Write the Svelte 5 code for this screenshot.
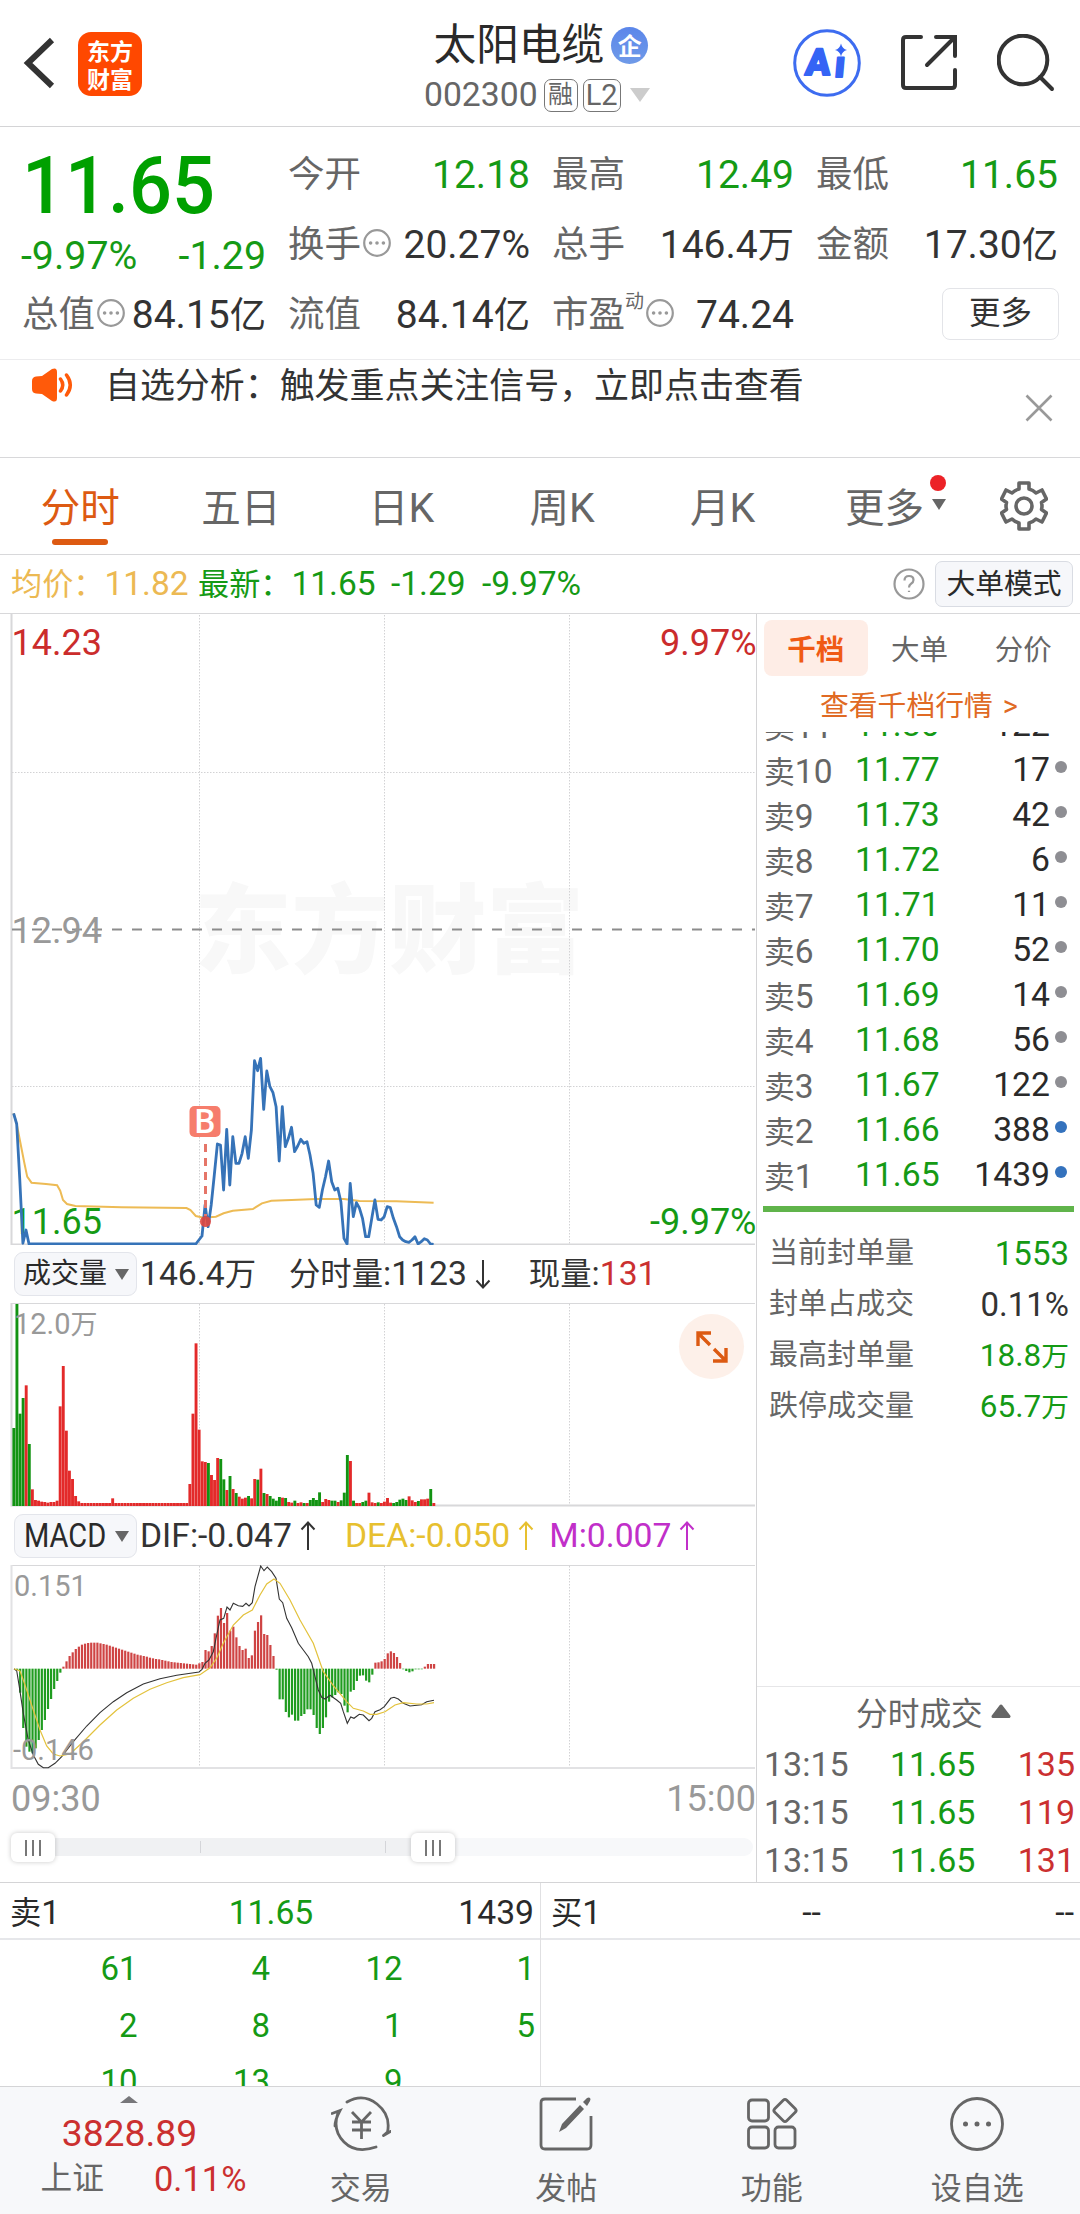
<script>
  const HAN = /([\u3000-\u9fff\uff00-\uffef]+)/;
  const runs = (s) => s.split(HAN).filter(Boolean).map((text) => ({ text, han: HAN.test(text) }));

  const stats = [
    { label: '今开', value: '12.18', down: true },
    { label: '最高', value: '12.49', down: true },
    { label: '最低', value: '11.65', down: true },
    { label: '换手', value: '20.27%', info: true },
    { label: '总手', value: '146.4万' },
    { label: '金额', value: '17.30亿' },
    { label: '总值', value: '84.15亿', info: true },
    { label: '流值', value: '84.14亿' },
    { label: '市盈', sup: '动', value: '74.24', info: true }
  ];

  const periods = ['分时', '五日', '日K', '周K', '月K'];

  const asks = [
    ['11', '11.80', 122], ['10', '11.77', 17], ['9', '11.73', 42], ['8', '11.72', 6],
    ['7', '11.71', 11], ['6', '11.70', 52], ['5', '11.69', 14], ['4', '11.68', 56],
    ['3', '11.67', 122], ['2', '11.66', 388], ['1', '11.65', 1439]
  ];

  const seals = [
    ['当前封单量', '1553', true],
    ['封单占成交', '0.11%', false],
    ['最高封单量', '18.8万', true],
    ['跌停成交量', '65.7万', true]
  ];

  const ticks = [['13:15', '11.65', 135], ['13:15', '11.65', 119], ['13:15', '11.65', 131]];
  const queue = ['61', '4', '12', '1', '2', '8', '1', '5', '10', '13', '9', ''];

  const join = (pts) => pts.map(([x, y]) => `${x.toFixed(1)},${y.toFixed(1)}`).join(' ');

  // minute index -> horizontal position in the plots
  const minuteX = (i) => 13.6 + i * 3.088;
  const priceY = (v) => 226 + v / 3;

  const flat = Array(54).fill(1212);
  const price = [820, 852, 1020, 1210, 1170, 1212, ...flat, 1200, 1188, 1095, 1160, 1095, 1005, 912, 915, 1050, 868,
    1035, 890, 970, 970, 940, 890, 955, 870, 662, 692, 655, 808, 693, 740, 758, 800, 963, 800, 920, 895, 862, 935,
    918, 898, 910, 905, 945, 1000, 1095, 1102, 1050, 1010, 963, 1025, 1050, 1045, 1085, 1195, 1212, 1030, 1130,
    1088, 1105, 1135, 1190, 1190, 1135, 1080, 1138, 1140, 1130, 1100, 1103, 1135, 1160, 1190, 1200, 1205, 1207,
    1200, 1190, 1212, 1205, 1196, 1200, 1212, 1213];
  const priceLine = join(price.map((v, i) => [minuteX(i), priceY(v)]));

  const average = [[0, 820], [1, 852], [3.5, 970], [4.4, 1010], [5.8, 1028], [10.5, 1032], [14.1, 1036], [15.1, 1052],
    [16, 1080], [17.3, 1092], [20, 1098], [35, 1102], [56, 1104], [57.3, 1110], [59, 1128], [61.5, 1133],
    [65.5, 1130], [68, 1120], [71, 1112], [77.5, 1107], [80.4, 1090], [83.5, 1082], [90, 1080], [98, 1077],
    [107, 1077], [112, 1083], [124, 1084], [136, 1088]];
  const averageLine = join(average.map(([i, v]) => [minuteX(i), priceY(v)]));

  const rep = (v, n) => Array(n).fill(v);
  const volume = ['g564', 'g192', 'g521', 'g474', 'r436', 'g612', 'r748', 'r780', 'r782', 'r785', 'r786', 'r788',
    'r786', 'r786', 'r782', 'r499', 'r378', 'r572', 'r692', 'r717', 'r768', 'r784', ...rep('r789', 10), 'r775',
    ...rep('r789', 24), 'r732', 'r521', 'r310', 'r569', 'r664', 'r666', 'g669', 'r705', 'r720', 'r654', 'g657',
    'g718', 'r750', 'g708', 'r747', 'g759', 'r770', 'r776', 'r773', 'g768', 'r775', 'r717', 'g719', 'r686', 'g759',
    'r762', 'g768', 'g776', 'g782', 'g771', 'r773', 'g774', 'r786', 'r788', 'g782', 'r789', 'r787', 'g789', 'r789',
    'g780', 'g774', 'g780', 'g757', 'r786', 'r777', 'r780', 'g782', 'g782', 'r786', 'g781', 'g758', 'g645', 'r663',
    'g782', 'r789', 'r789', 'g786', 'g782', 'r758', 'r787', 'r789', 'g787', 'r789', 'r785', 'r774', 'r788', 'g789',
    'g786', 'g779', 'g776', 'g780', 'r769', 'r781', 'r786', 'g783', 'r778', 'r778', 'r776', 'g747', 'r789'
  ].map((s) => ({ up: s[0] === 'r', y: Number(s.slice(1)) / 3 - 63 }));

  const macdY = (v) => v / 3 - 65;
  const histogram = [510, 578, 684, 740, 755, 760, 745, 720, 690, 660, 627, 597, 567, 543, 518, 500, 484, 468, 457,
    447, 440, 434, 431, 429, 428, 428, 428, 430, 432, 434, 437, 440, 443, 446, 449, 452, 455, 458, 461, 464, 466,
    468, 470, 473, 475, 477, 478, 480, 482, 484, 486, 487, 488, 489, 490, 491, 492, 493, 494, 490, 486, 450, 454,
    438, 400, 347, 324, 369, 339, 392, 380, 412, 438, 450, 446, 474, 466, 392, 366, 346, 402, 405, 435, 468, 509,
    598, 598, 636, 652, 644, 662, 662, 648, 642, 628, 628, 645, 684, 702, 684, 652, 605, 592, 585, 577, 582, 617,
    637, 575, 570, 543, 527, 526, 542, 547, 524, 488, 487, 484, 477, 460, 454, 459, 471, 489, 506, 513, 517, 514,
    508, 508, 506, 500, 492, 492, 492];
  const zero = macdY(506);
  const histStep = 417 / (histogram.length - 1);

  const scaled = (pts) => join(pts.map(([x, y]) => [x / 3, macdY(y)]));
  const dif = scaled([[42, 506], [50, 512], [58, 560], [70, 640], [85, 720], [100, 765], [115, 793], [130, 803],
    [145, 803], [165, 790], [185, 770], [220, 725], [260, 678], [300, 638], [340, 605], [380, 578], [430, 552],
    [480, 536], [530, 526], [597, 516], [606, 508], [615, 490], [627, 480], [640, 455], [650, 405], [660, 360],
    [671, 355], [681, 321], [690, 330], [700, 310], [715, 317], [728, 319], [738, 310], [747, 318], [757, 308],
    [765, 260], [782, 198], [792, 212], [802, 201], [815, 215], [828, 235], [838, 297], [848, 308], [860, 355],
    [875, 383], [895, 430], [910, 450], [925, 470], [935, 490], [945, 530], [955, 570], [965, 592], [975, 597],
    [990, 586], [1010, 600], [1022, 610], [1030, 635], [1042, 670], [1052, 651], [1062, 655], [1078, 643],
    [1090, 645], [1107, 662], [1115, 655], [1125, 635], [1140, 629], [1153, 620], [1172, 595], [1182, 592],
    [1195, 597], [1210, 610], [1230, 618], [1265, 614], [1280, 605], [1302, 601]]);
  const dea = scaled([[42, 506], [60, 513], [75, 555], [100, 630], [120, 690], [140, 738], [160, 762], [180, 768],
    [210, 762], [250, 725], [300, 675], [350, 630], [400, 595], [450, 568], [500, 548], [550, 533], [600, 524],
    [630, 503], [650, 475], [670, 430], [700, 375], [730, 345], [757, 330], [780, 285], [800, 252], [822, 237],
    [840, 250], [870, 300], [900, 360], [940, 430], [970, 515], [1000, 557], [1040, 605], [1060, 625], [1090, 633],
    [1110, 643], [1130, 643], [1155, 635], [1185, 615], [1210, 608], [1250, 612], [1280, 612], [1302, 608]]);

  const columns = [199.5, 384.5, 569.5];
</script>

{#snippet mixed(s)}{#each runs(s) as r}{#if r.han}<span class="han">{r.text}</span>{:else}{r.text}{/if}{/each}{/snippet}

{#snippet dots()}
  <svg class="dots" viewBox="0 0 28 28"><circle cx="14" cy="14" r="12.8" /><path d="M7.6 14h.01M14 14h.01M20.4 14h.01" /></svg>
{/snippet}

{#snippet arrow(down)}
  <svg class="arrow" class:flip={down} viewBox="0 0 16 30"><path d="M8 29V1.5M1.5 8.5 8 1.5l6.5 7" /></svg>
{/snippet}

<div class="screen">
  <header>
    <svg class="back" viewBox="0 0 34 54"><path d="M29 4 5 27 29 50" /></svg>
    <div class="logo"><span>东方</span><span>财富</span></div>
    <div class="title">
      <div class="name">太阳电缆<span class="corp">企</span></div>
      <div class="code">002300<span class="tag rong">融</span><span class="tag l2">L2</span><i class="caret"></i></div>
    </div>
    <div class="actions">
      <svg class="ai" viewBox="0 0 68 68">
        <circle cx="34" cy="34" r="32.3" />
        <g transform="skewX(-5)"><text x="15.500" y="46.500" class="ai-text">A</text><text x="45" y="48" class="ai-text">ı</text></g>
        <path d="M48 14.500Q49.200 19.800 54 21 49.200 22.200 48 27.500 46.800 22.200 42 21 46.800 19.800 48 14.500Z" />
      </svg>
      <svg class="share" viewBox="0 0 56 56"><path d="M20 2H5Q2 2 2 5v45q0 3 3 3h46q3 0 3-3V35M35 2h19v19M53 3 26 30" /></svg>
      <svg class="search" viewBox="0 0 58 58"><circle cx="26" cy="26" r="24.300" /><path d="m43 43 12 12" /></svg>
    </div>
  </header>

  <section class="quote">
    <div class="last">
      <div class="big">11.65</div>
      <div class="chg"><span>-9.97%</span><span>-1.29</span></div>
    </div>
    {#each stats as s}
      <div class="stat">
        <span class="lab">{s.label}{#if s.sup}<sup>{s.sup}</sup>{/if}</span>
        {#if s.info}{@render dots()}{/if}
        <span class="val" class:down={s.down}>{@render mixed(s.value)}</span>
      </div>
    {/each}
    <div class="stat end"><button class="more">更多</button></div>
  </section>

  <section class="banner">
    <svg class="horn" viewBox="0 0 42 34">
      <path class="fill" d="M0 13q0-4 4-4.500L10 8 20 1q5-2 5 3v26q0 5-5 3L10 26l-6-.5Q0 25 0 21Z" />
      <path d="M28.500 11q4.500 6 0 12M34.500 7q7.500 10 0 20" />
    </svg>
    <p>自选分析：触发重点关注信号，立即点击查看</p>
    <svg class="close" viewBox="0 0 28 28"><path d="m1.500 1.500 25 25m0-25-25 25" /></svg>
  </section>

  <nav class="periods">
    {#each periods as p, i}
      <span class="period" class:on={i === 0}>{@render mixed(p)}</span>
    {/each}
    <span class="period last-tab">更多<i class="tri"></i><i class="badge"></i></span>
    <svg class="gear" viewBox="0 0 48 50">
      <path d="M19 2h10v6q4 1 7 4l6-3 4.500 9-5 3.500q1 3.500 0 7l5 3.500-4.500 9-6-3q-3 3-7 4v6H19v-6q-4-1-7-4l-6 3-4.500-9 5-3.500q-1-3.500 0-7l-5-3.500L6 9l6 3q3-3 7-4Z" />
      <circle cx="24" cy="25" r="8" />
    </svg>
  </nav>

  <section class="info">
    <span class="avg">{@render mixed('均价：11.82')}</span>
    <span class="new">{@render mixed('最新：11.65')}</span>
    <span class="d1">-1.29</span>
    <span class="d2">-9.97%</span>
    <svg class="help" viewBox="0 0 32 32"><circle cx="16" cy="16" r="14.500" /><path d="M11.500 12.500q0-4.500 4.500-4.500t4.500 4q0 2.200-2.500 3.800Q16 17 16 19.500M16 22.800v1.200" /></svg>
    <button class="mode">大单模式</button>
  </section>

  <main>
    <div class="charts">
      <svg class="plot" width="756" height="631" viewBox="0 0 756 631">
        <text class="mark" x="194" y="351" textLength="390" lengthAdjust="spacingAndGlyphs">东方财富</text>
        <g class="grid">
          {#each columns as x}<path d="M{x} 1V630" />{/each}
          <path d="M12 158.500H755M12 472.500H755" />
        </g>
        <path class="frame" d="M11.500 0V630.500H755" />
        <path class="mid" d="M12 315.500H755" />
        <text class="tick up" x="11.500" y="40.500">14.23</text>
        <text class="tick up" x="756.500" y="40.500" text-anchor="end">9.97%</text>
        <text class="tick" x="11.500" y="328.500">12.94</text>
        <text class="tick down" x="11.500" y="620">11.65</text>
        <text class="tick down" x="756.500" y="620" text-anchor="end">-9.97%</text>
        <polyline class="avg-line" points={averageLine} />
        <polyline class="price-line" points={priceLine} />
        <path class="b-stem" d="M205.500 530V602" />
        <circle class="b-dot" cx="205.500" cy="607.500" r="5.500" />
        <rect class="b-box" x="189.500" y="492" width="31" height="31" rx="5" />
        <text class="b-text" x="205" y="518.500" text-anchor="middle">B</text>
      </svg>

      <div class="ind">
        <button class="pick">成交量<i></i></button>
        <span>{@render mixed('146.4万')}</span>
        <span class="minute">{@render mixed('分时量:1123')}</span>{@render arrow(true)}
        <span class="now">{@render mixed('现量:')}<b>131</b></span>
      </div>

      <div class="vol">
        <svg class="plot" width="756" height="204" viewBox="0 0 756 204">
          <g class="grid">{#each columns as x}<path d="M{x} 1V202" />{/each}</g>
          <path class="frame thin" d="M11 .5H755" />
          <path class="frame" d="M11.500 0V202.500H755" />
          {#each volume as v, i}
            <rect class={v.up ? 'red' : 'green'} x={12.400 + i * 3.088} y={v.y} width="2.900" height={203 - v.y} />
          {/each}
          <text class="small" x="14" y="31">12.0<tspan class="han">万</tspan></text>
        </svg>
        <div class="expand">
          <svg viewBox="0 0 32 32"><path d="M2 15V2h13M2 2l12 12M30 17v13H17M30 30 18 18" /></svg>
        </div>
      </div>

      <div class="ind">
        <button class="pick"><em>MACD</em><i></i></button>
        <span>DIF:-0.047</span>{@render arrow(false)}
        <span class="dea">DEA:-0.050{@render arrow(false)}</span>
        <span class="m">M:0.007{@render arrow(false)}</span>
      </div>

      <svg class="plot" width="756" height="205" viewBox="0 0 756 205">
        <g class="grid">{#each columns as x}<path d="M{x} 1V202" />{/each}</g>
        <path class="frame thin" d="M11 .5H755" />
        <path class="frame soft" d="M11.500 0V203H755" />
        {#each histogram as v, i}
          {@const y = macdY(v)}
          <rect class={y < zero ? 'hr' : 'hg'} x={16 + i * histStep} y={Math.min(y, zero)} width="2.200" height={Math.max(Math.abs(y - zero), 0.6)} />
        {/each}
        <polyline class="dif" points={dif} />
        <polyline class="dea-line" points={dea} />
        <text class="small" x="14" y="31">0.151</text>
        <text class="small" x="13" y="195">-0.146</text>
      </svg>

      <div class="times"><span>09:30</span><span>15:00</span></div>

      <div class="slider">
        <div class="track"><div class="range"></div>{#each columns.slice(0, 2) as x}<i class="notch" style:left="{x - 33}px"></i>{/each}</div>
        <div class="thumb start"><i></i><i></i><i></i></div>
        <div class="thumb stop"><i></i><i></i><i></i></div>
      </div>
    </div>

    <aside>
      <div class="modes"><span class="on">千档</span><span>大单</span><span>分价</span></div>
      <div class="link">查看千档行情<span>&gt;</span></div>
      <div class="asks">
        {#each asks as [level, p, n]}
          <div class="ask">
            <span class="lv">{@render mixed('卖' + level)}</span>
            <span class="pr">{p}</span>
            <span class="qty">{n}</span>
            <i class:blue={n === 388 || n === 1439} class:none={level === '11'}></i>
          </div>
        {/each}
      </div>
      <div class="bar"></div>
      <div class="seals">
        {#each seals as [k, v, g]}
          <div><span>{k}</span><b class:down={g}>{@render mixed(v)}</b></div>
        {/each}
      </div>
      <div class="deals">
        <div class="deals-title">分时成交<svg viewBox="0 0 20 14"><path d="M10 2 18 12.500H2Z" /></svg></div>
        {#each ticks as [t, p, n]}
          <div class="deal"><span>{t}</span><span class="down">{p}</span><span class="up">{n}</span></div>
        {/each}
      </div>
    </aside>
  </main>

  <section class="depth">
    <div class="side">
      <div class="head"><span>{@render mixed('卖1')}</span><span class="down">11.65</span><span>1439</span></div>
      <div class="queue">{#each queue as q}<span>{q}</span>{/each}</div>
    </div>
    <div class="side">
      <div class="head"><span>{@render mixed('买1')}</span><span>--</span><span>--</span></div>
    </div>
  </section>

  <footer>
    <div class="index">
      <i></i>
      <strong>3828.89</strong>
      <div><span>上证</span><b>0.11%</b></div>
    </div>
    <div class="item">
      <svg viewBox="0 0 60 60">
        <path d="M16 8Q32-1 46 10t10.500 28M56.500 38 52.500 41.500M52.500 41.500 59.500 37.500M7 19Q1 36 13 48t32 5M1 19.500 9 16.500Q4 26 4 32" class="ring" />
        <path d="m21 18 9.500 10L40 18M30.500 28v17M21 28h19M21 36h19" />
      </svg>
      <span>交易</span>
    </div>
    <div class="item">
      <svg viewBox="0 0 60 60">
        <path d="M40 5H9Q5 5 5 9v42q0 4 4 4h42q4 0 4-4V22" />
        <path class="pen" d="m23 38 3-8 18-19 4 4-18 19ZM47 8l4-4q2-1 3 0t0 3l-3 5Z" />
      </svg>
      <span>发帖</span>
    </div>
    <div class="item">
      <svg viewBox="0 0 60 60">
        <rect x="6.500" y="6" width="20" height="21" rx="3.500" /><rect x="6.500" y="33" width="20" height="21" rx="3.500" />
        <rect x="33" y="33" width="20" height="21" rx="3.500" /><rect x="34.500" y="8" width="17" height="17" rx="2.500" transform="rotate(45 43 16.500)" />
      </svg>
      <span>功能</span>
    </div>
    <div class="item">
      <svg viewBox="0 0 60 60"><circle cx="30" cy="30" r="25.500" /><path class="pts" d="M18.500 30h.01M30 30h.01M41.500 30h.01" /></svg>
      <span>设自选</span>
    </div>
  </footer>
</div>

<style>
  :global(body) { margin: 0; background: #fff; }
  .screen, .screen * { box-sizing: border-box; }
  .screen {
    width: 1080px; height: 2214px; overflow: hidden; display: flex; flex-direction: column;
    font-family: Roboto, "Noto Sans CJK SC", sans-serif; color: #333; background: #fff; white-space: nowrap;
  }
  button { font: inherit; color: inherit; padding: 0; margin: 0; background: none; white-space: nowrap; }
  i, em { font-style: normal; }
  svg { display: block; flex: none; fill: none; }
  .han { font-size: .93em; }
  .down { color: #159a15; }
  .up { color: #cb3030; }

  header { height: 127px; flex: none; border-bottom: 1px solid #d4d4d6; display: grid; grid-template-columns: 23px 55px 64px 1fr 268px 19px; align-items: center; }
  .back { grid-column: 2; width: 34px; height: 54px; stroke: #333; stroke-width: 6; }
  .logo { width: 64px; height: 64px; border-radius: 13px; background: #ff4800; color: #fff; font: 700 23px/28px "Noto Sans CJK SC", sans-serif; display: flex; flex-direction: column; align-items: center; justify-content: center; margin-top: 1px; }
  .title { padding-left: 282px; align-self: start; }
  .name { font-size: 42.700px; line-height: 50px; margin-top: 20px; display: flex; align-items: center; padding-left: 9.500px; color: #2a2a2a; }
  .corp { width: 37px; height: 37px; border-radius: 50%; background: linear-gradient(#5b86ea, #6f9ae8); color: #fff; font: 700 24px/36px "Noto Sans CJK SC", sans-serif; text-align: center; margin-left: 7px; }
  .code { font-size: 33.700px; line-height: 40px; margin-top: 5px; display: flex; align-items: center; color: #666; }
  .tag { height: 33px; border: 1.500px solid #777; border-radius: 7px; line-height: 30px; text-align: center; }
  .rong { width: 34px; font-size: 25px; margin-left: 6px; }
  .l2 { width: 38px; font-size: 29px; margin-left: 5px; }
  .caret { border: 10.500px solid transparent; border-top: 14px solid #ccc; border-bottom: 0; margin-left: 9px; }
  .actions { display: flex; align-items: center; justify-content: space-between; }
  .ai { width: 68px; height: 68px; }
  .ai circle { stroke: #3d6cf0; stroke-width: 3; }
  .ai path { fill: #3564f5; }
  .ai-text { font: 900 37px Roboto, sans-serif; fill: #3564f5; stroke: #3564f5; stroke-width: 1.800; stroke-linejoin: round; }
  .share { width: 56px; height: 56px; stroke: #333; stroke-width: 4; stroke-linecap: round; }
  .search { width: 58px; height: 58px; stroke: #333; stroke-width: 4; margin: 0 6px 0 0; stroke-linecap: round; }

  .quote { height: 233px; flex: none; border-bottom: 1px solid #ececee; padding: 12px 0 0 22px; display: grid; grid-template-columns: 244px 242px 242px 242px; column-gap: 22px; grid-template-rows: 70px 70px 70px; }
  .last { grid-row: 1 / 3; color: #00a000; }
  .big { font-size: 80px; font-weight: 500; line-height: 95px; transform: scaleX(.945); transform-origin: 0 50%; }
  .chg { display: flex; justify-content: space-between; font-size: 39.300px; line-height: 44px; margin-left: -1px; color: #159a15; }
  .stat { display: flex; align-items: center; font-size: 39px; line-height: 70px; padding-top: 2px; }
  .lab { font-size: 36.500px; color: #666; }
  .lab sup { font-size: 19px; line-height: 20px; vertical-align: 19px; }
  .val { margin-left: auto; }
  .dots { width: 28px; height: 28px; stroke: #999; stroke-width: 2.200; margin: -5px 0 0 2px; }
  .dots path { stroke-width: 3.600; stroke-linecap: round; }
  .end { justify-content: flex-end; padding: 0; }
  .more { width: 117px; height: 52px; border: 1.500px solid #e3e4e8; border-radius: 8px; font-size: 31.500px; line-height: 50px; margin-right: -1px; }

  .banner { height: 98px; flex: none; border-bottom: 1px solid #d8d8da; display: flex; padding: 8px 27px 0 32px; }
  .horn { width: 42px; height: 34px; stroke: #ff5a0a; stroke-width: 3.500; stroke-linecap: round; }
  .horn .fill { fill: #ff5a0a; stroke: none; }
  .banner p { margin: 0 auto 0 31px; font-size: 34.950px; line-height: 37px; }
  .close { width: 28px; height: 28px; margin-top: 26px; stroke: #999; stroke-width: 2.600; }

  .periods { height: 97px; flex: none; border-bottom: 1px solid #d8d8da; display: flex; align-items: center; font-size: 41px; color: #666; }
  .periods .han { font-size: .965em; }
  .period { width: 160.600px; text-align: center; position: relative; line-height: 60px; margin-top: 5px; }
  .period.on { color: #dd5a12; }
  .period.on::after { content: ""; position: absolute; left: 52px; top: 61px; width: 56px; height: 6px; border-radius: 3px; background: #dd5a12; }
  .last-tab { font-size: 39.500px; text-align: left; padding-left: 42px; width: 197px; }
  .tri { position: absolute; left: 129px; top: 20px; border: 7px solid transparent; border-top: 11px solid #666; border-bottom: 0; }
  .badge { position: absolute; left: 127px; top: -4px; width: 16px; height: 16px; border-radius: 50%; background: #ec2227; }
  .gear { width: 48px; height: 50px; stroke: #666; stroke-width: 3.600; stroke-linejoin: round; margin-top: -1px; }

  .info { height: 59px; flex: none; border-bottom: 1px solid #d8d8da; display: flex; align-items: center; padding: 0 7px 0 11px; font-size: 33.500px; line-height: 58px; color: #159a15; }
  .avg { color: #ecb953; width: 187px; }
  .new { width: 193px; }
  .d1 { width: 91px; }
  .help { width: 32px; height: 32px; margin-left: auto; stroke: #999; stroke-width: 2.200; }
  .mode { width: 138px; height: 46px; margin-left: 10px; border: 1.500px solid #d9dce3; border-radius: 7px; background: #f6f7fa; color: #2a2a2a; font-size: 28.800px; line-height: 45px; }

  main { height: 1269px; flex: none; border-bottom: 1px solid #d4d4d6; display: grid; grid-template-columns: 757px 323px; }
  .charts { border-right: 1px solid #d4d4d6; }
  .plot { font-family: Roboto, "Noto Sans CJK SC", sans-serif; }
  .mark { font: 900 97px "Noto Sans CJK SC", sans-serif; fill: #f8f8f8; }
  .grid path { stroke: #d2d2d4; stroke-dasharray: 1.500 1.500; }
  .frame { stroke: #d8d8da; stroke-width: 2; }
  .frame.thin { stroke-width: 1; }
  .frame.soft { stroke: #e2e2e4; }
  .mid { stroke: #8c8c8c; stroke-width: 2; stroke-dasharray: 10 10; }
  .tick { font-size: 36px; fill: #999; }
  .tick.up { fill: #cb2c2c; }
  .tick.down { fill: #159a15; }
  .avg-line { stroke: #edbb55; stroke-width: 2; }
  .price-line { stroke: #3673b8; stroke-width: 2.800; stroke-linejoin: round; }
  .b-stem { stroke: #e57568; stroke-width: 3; stroke-dasharray: 8 6; }
  .b-dot { fill: #e0473f; opacity: .9; }
  .b-box { fill: #f67d6c; }
  .b-text { fill: #fff; font-size: 33px; font-weight: 500; }
  .small { font-size: 29px; fill: #999; }
  .red { fill: #e32a2a; }
  .green { fill: #129312; }
  .hr { fill: #cf4444; }
  .hg { fill: #1f9c1f; }
  .dif { stroke: #333; stroke-width: 1.100; }
  .dea-line { stroke: #e3c23c; stroke-width: 1.200; }

  .ind { height: 58px; display: flex; align-items: center; padding-left: 14px; font-size: 33.700px; line-height: 56px; }
  .pick { width: 123px; height: 44px; border: 1.500px solid #e3e5eb; border-radius: 9px; background: #f6f7fa; font-size: 28px; line-height: 40px; display: flex; align-items: center; padding-left: 8px; margin-right: 3px; color: #2a2a2a; }
  .pick em { font-size: 33px; width: 84px; transform: scaleX(.88); transform-origin: 0 50%; padding-left: 1px; }
  .pick i { border: 7px solid transparent; border-top: 11px solid #666; border-bottom: 0; margin-left: 8px; }
  .minute { margin-left: 33px; }
  .now { margin-left: 38px; }
  .now b { font-weight: 400; color: #cb3030; }
  .arrow { width: 16px; height: 30px; stroke: currentColor; stroke-width: 2; margin-left: 8px; }
  .flip { transform: scaleY(-1); }
  .dea, .m { display: flex; align-items: center; }
  .dea { color: #e7c02f; margin-left: 29px; }
  .m { color: #c12fc9; margin-left: 15px; }
  .vol { position: relative; height: 204px; }
  .expand { position: absolute; left: 679px; top: 11px; width: 65px; height: 65px; border-radius: 50%; background: #fdf0e9; display: grid; place-items: center; }
  .expand svg { width: 32px; height: 32px; stroke: #dc5a12; stroke-width: 3.400; }
  .times { height: 56px; display: flex; justify-content: space-between; padding: 0 0 0 11px; font-size: 36px; line-height: 58px; color: #999; }
  .slider { height: 56px; position: relative; padding: 12px 3px 0 33px; }
  .track { height: 18px; border-radius: 9px; background: #f7f8fa; position: relative; }
  .range { width: 400px; height: 18px; background: #f0f1f3; }
  .notch { position: absolute; top: 3px; width: 1px; height: 12px; background: #d4d5d9; }
  .thumb { position: absolute; top: 7px; width: 44px; height: 29px; border-radius: 6px; background: #fff; box-shadow: 0 0 5px rgba(0, 0, 0, .22); display: flex; justify-content: center; align-items: center; gap: 5px; }
  .thumb i { width: 2px; height: 16px; background: #777; }
  .start { left: 11px; }
  .stop { left: 411px; }

  aside { display: flex; flex-direction: column; }
  .modes { display: flex; padding: 6px 5px 0 7px; height: 63px; font-size: 28.500px; line-height: 62px; color: #666; text-align: center; }
  .modes span { width: 104px; }
  .modes .on { height: 56px; border-radius: 8px; background: #feede6; color: #f05a14; font-weight: 700; }
  .link { height: 55px; line-height: 59px; font-size: 28.800px; color: #e06a24; padding-left: 63px; }
  .link span { margin-left: 10px; }
  .asks { height: 474px; overflow: hidden; display: flex; flex-direction: column; justify-content: flex-end; padding-bottom: 13px; }
  .ask { height: 45px; flex: none; display: grid; grid-template-columns: 90px 85px 110px 1fr; align-items: center; padding-left: 8px; font-size: 33.700px; line-height: 45px; color: #2a2a2a; }
  .lv { color: #666; padding-top: 6px; font-size: 33.500px; margin-left: -1px; }
  .lv .han { font-size: .92em; }
  .pr { color: #159a15; }
  .qty { text-align: right; }
  .ask i { width: 12px; height: 12px; border-radius: 50%; background: #8e8e93; margin: -4px 0 0 5px; }
  .ask .blue { background: #3472bd; }
  .ask .none { visibility: hidden; }
  .bar { height: 6px; margin: 0 6px; background: #60b44b; flex: none; }
  .seals { padding: 16px 11px 0 12px; flex: 1; }
  .seals div { height: 51px; display: flex; justify-content: space-between; align-items: center; font-size: 29px; line-height: 51px; color: #666; }
  .seals b { font-size: 33px; font-weight: 400; color: #333; }
  .seals b.down { color: #159a15; }
  .seals div:nth-child(n+3) b { font-size: 31.500px; }
  .seals .han { font-size: .88em; }
  .deals { height: 196px; border-top: 1px solid #e6e6e8; }
  .deals-title { height: 53px; line-height: 50px; display: flex; align-items: center; padding: 2px 0 0 99px; font-size: 31.700px; color: #666; }
  .deals-title svg { width: 20px; height: 14px; margin: -8px 0 0 8px; fill: #666; stroke: #666; stroke-width: 3; stroke-linejoin: round; }
  .deal { height: 48px; display: grid; grid-template-columns: 126px 1fr auto; padding: 0 5px 0 7px; font-size: 34px; line-height: 48px; color: #666; }
  .deal .down { color: #159a15; }
  .deal .up { color: #cb3030; }

  .depth { height: 204px; flex: none; border-bottom: 1px solid #d4d4d6; display: grid; grid-template-columns: 540px 540px; overflow: hidden; }
  .side + .side { border-left: 1px solid #e0e0e2; }
  .head { height: 57px; border-bottom: 2px solid #e6e7ea; display: grid; grid-template-columns: 1fr 1fr 1fr; padding: 0 6px 0 10px; font-size: 33.700px; line-height: 59px; color: #2a2a2a; }
  .head span:nth-child(2) { text-align: center; padding-right: 2px; }
  .head span:nth-child(3) { text-align: right; }
  .head .down { color: #159a15; }
  .queue { display: grid; grid-template-columns: repeat(4, 132.500px); grid-auto-rows: 56.500px; padding-left: 5px; font-size: 33px; line-height: 57px; color: #159a15; text-align: right; }

  footer { height: 127px; flex: none; background: #f7f8fa; display: grid; grid-template-columns: 258px repeat(4, 205.500px); }
  .index { display: flex; flex-direction: column; align-items: center; padding-top: 9px; color: #cb3030; }
  .index i { border: 9.500px solid transparent; border-bottom: 7px solid #77777a; border-top: 0; }
  .index strong { font-size: 37.300px; font-weight: 400; line-height: 44px; margin: 8px 0 1px 1px; }
  .index div { display: flex; gap: 50px; align-items: center; line-height: 46px; margin-left: 29px; }
  .index span { font-size: 31.700px; color: #666; }
  .index b { font-size: 34.500px; font-weight: 400; }
  .item { display: flex; flex-direction: column; align-items: center; padding-top: 7px; font-size: 31px; color: #666; }
  .item svg { width: 60px; height: 60px; stroke: #666; stroke-width: 2.800; }
  .item .ring { stroke-linecap: round; }
  .item .pen { fill: #666; stroke: none; }
  .item .pts { stroke-width: 5; stroke-linecap: round; }
  .item span { line-height: 40px; margin-top: 15px; }
</style>
